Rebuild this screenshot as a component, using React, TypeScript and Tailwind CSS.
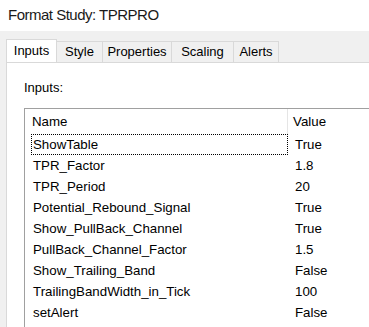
import React from "react";

const rows = [
  { name: "ShowTable", value: "True" },
  { name: "TPR_Factor", value: "1.8" },
  { name: "TPR_Period", value: "20" },
  { name: "Potential_Rebound_Signal", value: "True" },
  { name: "Show_PullBack_Channel", value: "True" },
  { name: "PullBack_Channel_Factor", value: "1.5" },
  { name: "Show_Trailing_Band", value: "False" },
  { name: "TrailingBandWidth_in_Tick", value: "100" },
  { name: "setAlert", value: "False" },
];

const tabs = ["Style", "Properties", "Scaling", "Alerts"];
const tabWidths = ["w-[46px]", "w-[69px]", "w-[62px]", "w-[45px]"];

const App = () => {
  return (
    <div
      className="w-[369px] h-[327px] overflow-hidden bg-[#f0f0f0] text-black"
      style={{ fontFamily: '"Liberation Sans", Arial, sans-serif' }}
    >
      <div className="h-[31px] bg-white flex items-center pl-[8px] text-[15px] tracking-[-0.5px] text-[#1a1a1a]">
        Format Study: TPRPRO
      </div>
      <div className="pl-[6px] pt-[8px]">
        <div className="flex items-end h-[23px] text-[13px]">
          <div className="w-[51px] h-[23px] bg-white border border-b-0 border-[#d9d9d9] flex items-center justify-center">
            Inputs
          </div>
          {tabs.map((t, i) => (
            <div
              key={t}
              className={`${tabWidths[i]} h-[21px] border-t border-r border-[#d9d9d9] flex items-center justify-center`}
            >
              {t}
            </div>
          ))}
        </div>
        <div className="bg-white border-l border-t border-[#d9d9d9] h-[300px] pl-[17px] pt-[17px]">
          <div className="text-[13px] h-[15px] leading-[15px]">Inputs:</div>
          <div className="mt-[13px] border-l border-t border-[#a0a0a0] h-[250px] text-[13.3px]">
            <div className="flex h-[25px] items-center">
              <div className="w-[263px] pl-[7px] h-full flex items-center border-r border-[#e5e5e5]">Name</div>
              <div className="pl-[5px]">Value</div>
            </div>
            {rows.map((r, i) => (
              <div key={r.name} className="flex h-[21px] items-center">
                <div className="w-[263px] h-full flex items-center pl-[1px]">
                  <div
                    className={`h-[21px] w-[257px] ml-[5px] pl-[1px] flex items-center ${
                      i === 0 ? "border border-dotted border-black" : "border border-transparent"
                    }`}
                  >
                    {r.name}
                  </div>
                </div>
                <div className="pl-[7px]">{r.value}</div>
              </div>
            ))}
          </div>
        </div>
      </div>
    </div>
  );
};

export default App;
